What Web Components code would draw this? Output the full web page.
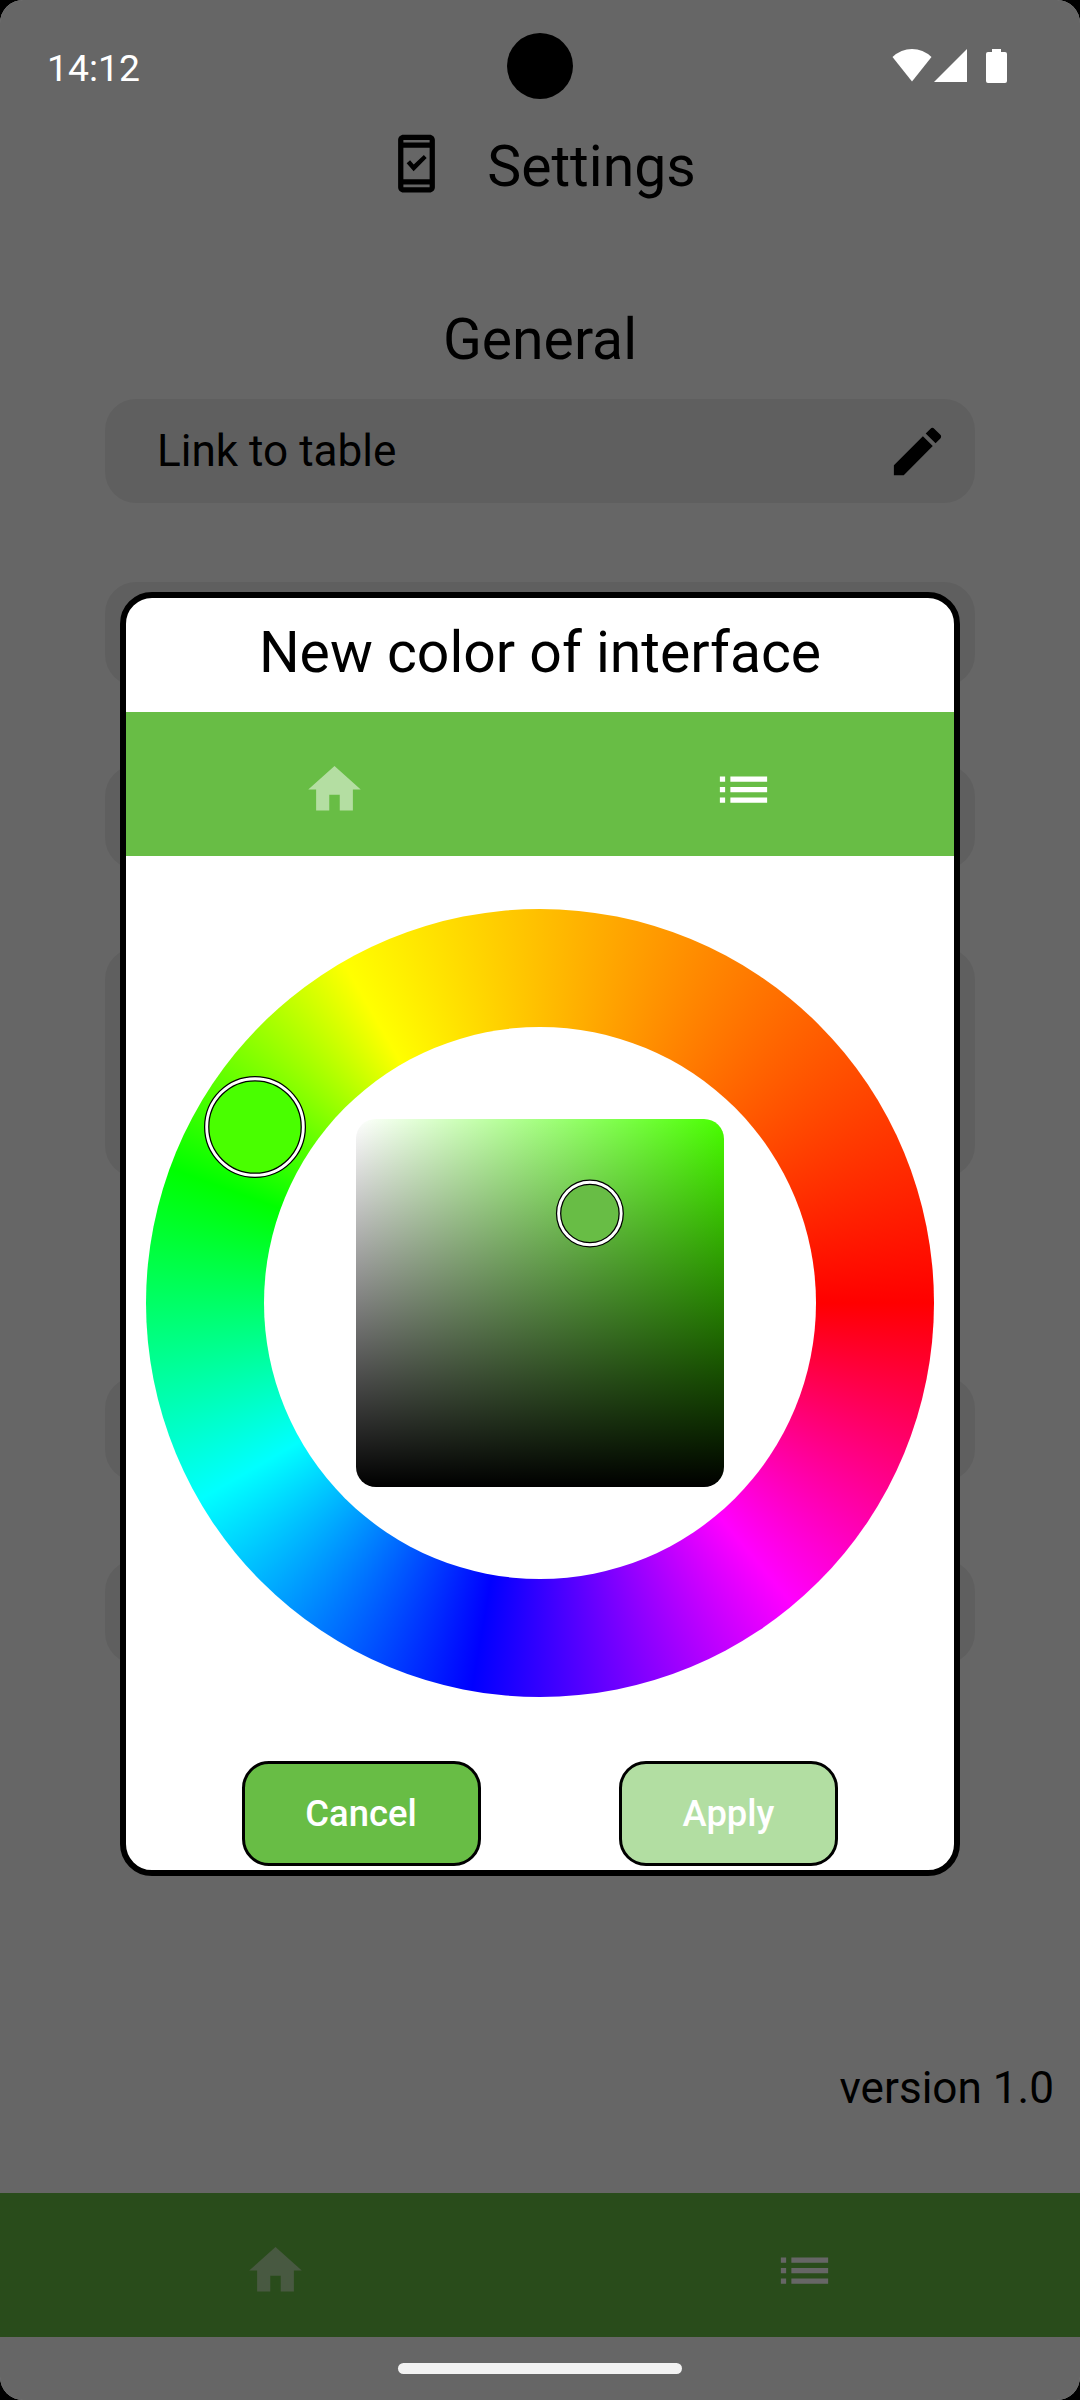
<!DOCTYPE html>
<html lang="en">
<head>
<meta charset="utf-8">
<title>Settings</title>
<style>
  html, body { margin: 0; background: #000; }
  body { font-family: Roboto, "Liberation Sans", sans-serif; color: #000; }
</style>
</head>
<body>
<phone-screen>
  <status-bar slot="status" time="14:12"></status-bar>
  <settings-page></settings-page>
  <color-dialog slot="dialog" heading="New color of interface"></color-dialog>
</phone-screen>

<script>
const define = (name, html, setup) => {
  const template = document.createElement('template');
  template.innerHTML = html;
  customElements.define(name, class extends HTMLElement {
    constructor() {
      super();
      this.attachShadow({ mode: 'open' }).append(template.content.cloneNode(true));
    }
    connectedCallback() { if (setup) setup(this, this.shadowRoot); }
  });
};

const ICONS = {
  home: '<path d="M10 20v-6h4v6h5v-8h3L12 3 2 12h3v8z"/>',
  list: '<path d="M3 13h2v-2H3v2zm0 4h2v-2H3v2zm0-8h2V7H3v2zm4 4h14v-2H7v2zm0 4h14v-2H7v2zM7 7v2h14V7H7z"/>',
  edit: '<path d="M3 17.25V21h3.75L17.81 9.94l-3.75-3.75L3 17.25zM20.71 7.04c.39-.39.39-1.02 0-1.41l-2.34-2.34c-.39-.39-1.02-.39-1.41 0l-1.83 1.83 3.75 3.75 1.83-1.83z"/>',
  phone: '<path d="M17 1.01 7 1c-1.1 0-2 .9-2 2v18c0 1.1.9 2 2 2h10c1.1 0 2-.9 2-2V3c0-1.1-.9-1.99-2-1.99zM17 21H7v-1h10v1zm0-3H7V6h10v12zm0-14H7V3h10v1z"/><path d="M15.87 9.95 14.8 8.8 10.95 12.35 9.55 10.8 8.25 11.95 10.9 14.97z"/>'
};

define('app-icon', `
  <style>:host{display:block;width:63px;height:63px;flex:none}svg{display:block;width:100%;height:100%;fill:currentColor}</style>
  <svg viewBox="0 0 24 24"></svg>`,
  (el, root) => { root.querySelector('svg').innerHTML = ICONS[el.getAttribute('name')]; });

define('status-bar', `
  <style>
    :host{display:flex;align-items:center;justify-content:space-between;height:132px;padding:0 73px 0 47px;box-sizing:border-box;color:#fff;font-size:37.3px}
    .time{padding-top:3px}
    svg{display:block}
  </style>
  <span class="time"></span>
  <svg width="115" height="34" viewBox="892 49 115 34" fill="#fff">
    <path d="M892.5 57Q901 49 912 49T931.500 57L912 81.500z"/>
    <path d="M934 82L967 49V82z"/>
    <path d="M992 49h9v3h4a2 2 0 0 1 2 2v27a2 2 0 0 1-2 2h-17a2 2 0 0 1-2-2v-27a2 2 0 0 1 2-2h4z"/>
  </svg>`,
  (el, root) => { root.querySelector('.time').textContent = el.getAttribute('time'); });

define('tab-bar', `
  <style>
    :host{display:flex;align-items:center;height:144px;background:#68bd45;color:#fff}
    div{flex:1;display:flex;justify-content:center;padding-top:11px}
    .home{color:#b4dea2;padding-left:var(--home-shift,0)}
    .list{padding-right:var(--list-shift,0)}
  </style>
  <div class="home"><app-icon name="home"></app-icon></div>
  <div class="list"><app-icon name="list"></app-icon></div>`);

define('setting-row', `
  <style>
    :host{display:flex;align-items:center;justify-content:space-between;height:104px;box-sizing:border-box;padding:0 26px 0 52px;border-radius:31px;background:#eee;font-size:44.1px}
  </style>
  <slot></slot>`);

define('settings-page', `
  <style>
    :host{display:flex;flex-direction:column;height:2268px}
    header{display:flex;align-items:center;justify-content:center;gap:39px;height:62px;padding-left:1px}
    h1,h2{margin:0;font-weight:400;font-size:57.1px;line-height:68px}
    header h1{padding-top:8px}
    h2{text-align:center;margin-top:112px}
    main{display:flex;flex-direction:column;padding:25px 105px 0}
    .r2,.r3{margin-top:79px}
    .r4{margin-top:79px;height:229px}
    .r5{margin-top:200px}
    .r6{margin-top:79px}
    .version{margin-top:auto;padding-right:26px;text-align:right;font-size:44.1px;line-height:52px}
    tab-bar{margin:79px 0 63px;--home-shift:11px;--list-shift:11px}
  </style>
  <header><app-icon name="phone"></app-icon><h1>Settings</h1></header>
  <h2>General</h2>
  <main>
    <setting-row><span>Link to table</span><app-icon name="edit"></app-icon></setting-row>
    <setting-row class="r2"></setting-row>
    <setting-row class="r3"></setting-row>
    <setting-row class="r4"></setting-row>
    <setting-row class="r5"></setting-row>
    <setting-row class="r6"></setting-row>
  </main>
  <div class="version">version 1.0</div>
  <tab-bar></tab-bar>`);

define('color-wheel', `
  <style>
    :host{display:grid;place-items:center;position:relative;width:788px;height:788px}
    .ring{grid-area:1/1;width:788px;height:788px;border-radius:50%;
      background:conic-gradient(from 90deg,#f00 0deg,#f0f 50deg,#00f 100deg,#0ff 150deg,#0f0 200deg,#ff0 240deg,#f00 360deg);}
    .hole{grid-area:1/1;width:552px;height:552px;border-radius:50%;background:#fff}
    .shade{grid-area:1/1;width:368px;height:368px;border-radius:20px;
      background:linear-gradient(to bottom,transparent,#000),linear-gradient(to right,#fff,#49ff00)}
    .knobs{position:absolute;inset:0}
    .edge{fill:none;stroke:#000;stroke-width:5.4}
    .band{fill:none;stroke:#fff;stroke-width:2.9}
  </style>
  <div class="ring"></div><div class="hole"></div><div class="shade"></div>
  <svg class="knobs" width="788" height="788" viewBox="0 0 788 788">
    <circle cx="109" cy="218" r="48.300" fill="#49ff00"/>
    <circle class="edge" cx="109" cy="218" r="48.300"/>
    <circle class="band" cx="109" cy="218" r="48.300"/>
    <circle cx="443.900" cy="304.500" r="31.300" fill="#68bd45"/>
    <circle class="edge" cx="443.900" cy="304.500" r="31.300"/>
    <circle class="band" cx="443.900" cy="304.500" r="31.300"/>
  </svg>`);

define('pill-button', `
  <style>
    :host{display:flex;align-items:center;justify-content:center;box-sizing:border-box;height:105px;border:3px solid #000;border-radius:27px;background:#68bd45;color:#fff;font-size:36.4px;font-weight:500}
    :host([disabled]){background:#b2dea2}
  </style>
  <slot></slot>`);

define('color-dialog', `
  <style>
    :host{display:flex;flex-direction:column;box-sizing:border-box;width:840px;height:1284px;border:6px solid #000;border-radius:32px;background:#fff;overflow:hidden}
    h2{margin:0;height:114px;box-sizing:border-box;padding-top:21px;line-height:68px;text-align:center;font-size:57.1px;font-weight:400}
    color-wheel{align-self:center;margin-top:53px}
    tab-bar{flex:none;--home-shift:4px;--list-shift:6px}
    footer{display:flex;gap:138px;padding-left:116px;margin-top:64px}
    .cancel{width:239px;padding-right:1px}.apply{width:219px}
  </style>
  <h2></h2>
  <tab-bar></tab-bar>
  <color-wheel></color-wheel>
  <footer><pill-button class="cancel">Cancel</pill-button><pill-button class="apply" disabled>Apply</pill-button></footer>`,
  (el, root) => { root.querySelector('h2').textContent = el.getAttribute('heading'); });

define('phone-screen', `
  <style>
    :host{display:block;position:relative;width:1080px;height:2400px;box-sizing:border-box;padding-top:132px;border-radius:23px;background:#fff;overflow:hidden}
    .scrim{position:absolute;inset:0;display:flex;flex-direction:column;align-items:center;background:rgba(0,0,0,.6)}
    .scrim slot[name=status]{display:block;width:100%;height:132px}
    .dialog{margin-top:460px}
    .camera{position:absolute;left:507px;top:33px;width:66px;height:66px;border-radius:50%;background:#000}
    .grip{width:284px;height:11px;margin:auto 0 26px;border-radius:6px;background:#f2f2f2}
  </style>
  <slot></slot>
  <div class="scrim">
    <slot name="status"></slot>
    <div class="dialog"><slot name="dialog"></slot></div>
    <div class="grip"></div>
    <div class="camera"></div>
  </div>`);
</script>
</body>
</html>
